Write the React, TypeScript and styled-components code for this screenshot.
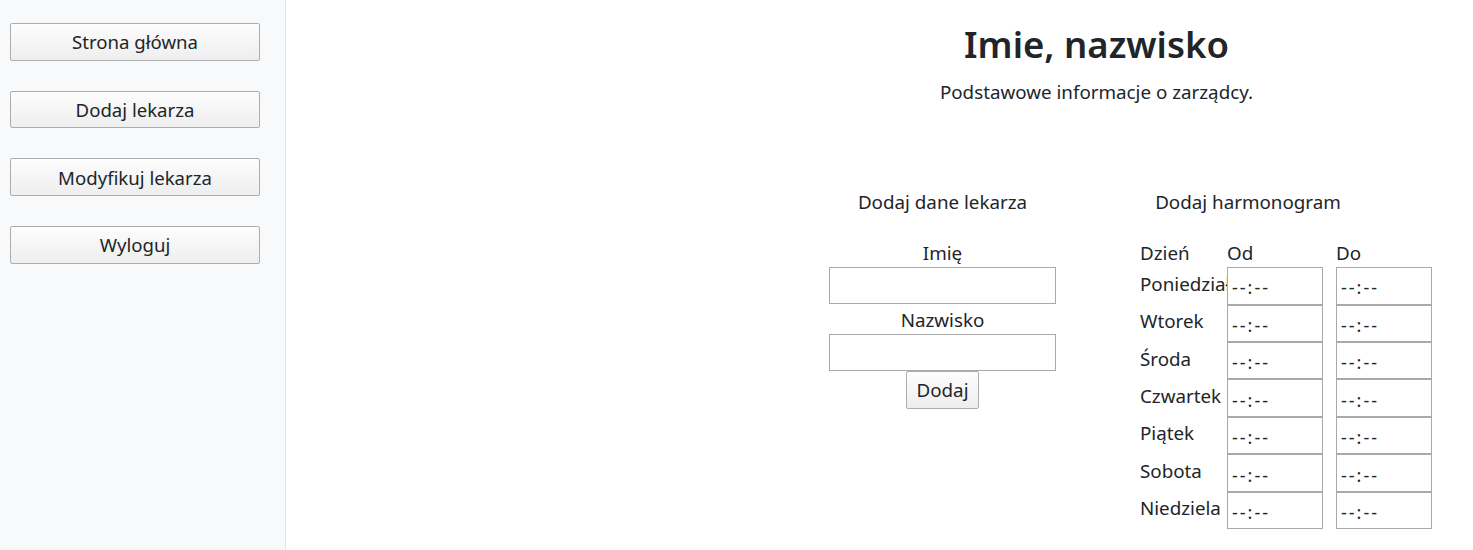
import React from "react";
import styled, { createGlobalStyle } from "styled-components";

const Global = createGlobalStyle`
  html, body { margin: 0; padding: 0; background: #fff; }
  body { font-family: "Noto Sans", "Open Sans", sans-serif; color: #212529; }
  * { box-sizing: border-box; }
`;

const Page = styled.div`
  display: flex;
  height: 550px;
`;

const Sidebar = styled.nav`
  width: 286px;
  flex: none;
  background: #f8f9fa;
  border-right: 1px solid #e2e4e7;
  padding: 23px 0 0 10px;
  display: flex;
  flex-direction: column;
  gap: 30.2px;
`;

const NavButton = styled.button`
  width: 250px;
  height: 37.5px;
  border: 1px solid #adadad;
  border-radius: 2px;
  background: linear-gradient(#fdfdfd, #eeeeee);
  font-family: inherit;
  font-size: 18.6px;
  color: #212529;
  padding: 0;
`;

const Main = styled.main`
  flex: 1;
  display: flex;
  justify-content: flex-end;
`;

const Content = styled.div`
  width: 753px;
  display: flex;
  flex-direction: column;
`;

const Title = styled.h1`
  margin: 20px 0 0;
  font-size: 36.5px;
  line-height: 48px;
  font-weight: 600;
  text-align: center;
`;

const Lead = styled.p`
  margin: 10.5px 0 0;
  font-size: 18.8px;
  line-height: 27px;
  text-align: center;
`;

const Columns = styled.div`
  display: flex;
  margin-top: 83.5px;
  padding-left: 109px;
  gap: 8px;
`;

const Column = styled.section<{ $w: number }>`
  width: ${(p) => p.$w}px;
  display: flex;
  flex-direction: column;
  align-items: center;
`;

const ColTitle = styled.h2`
  margin: 0 0 23.7px;
  font-size: 18.8px;
  line-height: 27px;
  font-weight: 400;
  text-align: center;
`;

const TextInput = styled.input`
  width: 227px;
  height: 37px;
  border: 1px solid #a9a9a9;
  background: #fff;
  font-family: inherit;
  font-size: 16px;
  margin: 0;
`;

const Label = styled.label`
  font-size: 18.8px;
  line-height: 27px;
  display: block;
  text-align: center;
  ${TextInput} + & {
    margin-top: 3.3px;
  }
`;

const SubmitButton = styled.button`
  height: 37.7px;
  padding: 0 9px;
  border: 1px solid #adadad;
  border-radius: 2px;
  background: linear-gradient(#fdfdfd, #eeeeee);
  font-family: inherit;
  font-size: 18.8px;
  color: #212529;
`;

const Schedule = styled.div`
  align-self: flex-start;
  margin-left: 76px;
  display: grid;
  grid-template-columns: 87px 96px 13px 96px;
  grid-template-rows: 27.5px;
  grid-auto-rows: 37.43px;
`;

const HeadCell = styled.div`
  font-size: 18.8px;
  line-height: 27px;
`;

const DayCell = styled.div`
  font-size: 18.8px;
  line-height: 27px;
  white-space: nowrap;
  overflow: hidden;
  padding-top: 3.5px;
`;

const TimeInput = styled.input`
  width: 96px;
  height: 37.43px;
  border: 1px solid #a9a9a9;
  background: #fff;
  font-family: inherit;
  font-size: 18px;
  letter-spacing: 2px;
  padding: 3px 0 0 4px;
  &::placeholder { color: #212529; opacity: 1; }
`;

const Spacer = styled.div``;

const days = ["Poniedziałek", "Wtorek", "Środa", "Czwartek", "Piątek", "Sobota", "Niedziela"];

export default function App() {
  return (
    <>
      <Global />
      <Page>
        <Sidebar>
          <NavButton>Strona główna</NavButton>
          <NavButton>Dodaj lekarza</NavButton>
          <NavButton>Modyfikuj lekarza</NavButton>
          <NavButton>Wyloguj</NavButton>
        </Sidebar>
        <Main>
          <Content>
            <Title>Imie, nazwisko</Title>
            <Lead>Podstawowe informacje o zarządcy.</Lead>
            <Columns>
              <Column $w={227}>
                <ColTitle>Dodaj dane lekarza</ColTitle>
                <Label htmlFor="imie">Imię</Label>
                <TextInput id="imie" type="text" />
                <Label htmlFor="nazwisko">Nazwisko</Label>
                <TextInput id="nazwisko" type="text" />
                <SubmitButton>Dodaj</SubmitButton>
              </Column>
              <Column $w={368}>
                <ColTitle>Dodaj harmonogram</ColTitle>
                <Schedule>
                  <HeadCell>Dzień</HeadCell>
                  <HeadCell>Od</HeadCell>
                  <Spacer />
                  <HeadCell>Do</HeadCell>
                  {days.map((d) => (
                    <React.Fragment key={d}>
                      <DayCell>{d}</DayCell>
                      <TimeInput type="text" placeholder="--:--" />
                      <Spacer />
                      <TimeInput type="text" placeholder="--:--" />
                    </React.Fragment>
                  ))}
                </Schedule>
              </Column>
            </Columns>
          </Content>
        </Main>
      </Page>
    </>
  );
}
